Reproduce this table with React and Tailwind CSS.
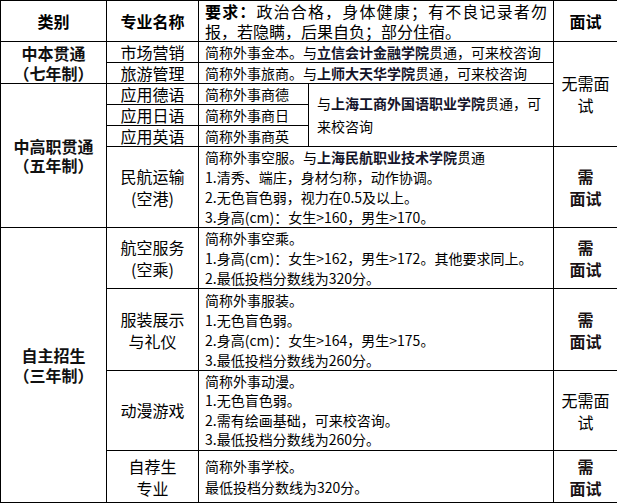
const FONT = "font-['Noto_Sans_CJK_SC','Noto_Sans',sans-serif]";

const cell = 'border border-black p-0';

function Lines({ lines }) {
  return (
    <div>
      {lines.map((l, i) => (
        <div key={i}>{l}</div>
      ))}
    </div>
  );
}

function Major({ children, tall = false }) {
  return (
    <td className={`${cell} text-center text-[16px] ${tall ? 'leading-[22px]' : 'leading-[19px]'}`}>
      {children}
    </td>
  );
}

function NeedInterview() {
  return (
    <td className={`${cell} text-center text-[16px] leading-[22px] font-bold text-[#1a1214]`}>
      <div>需</div>
      <div>面试</div>
    </td>
  );
}

function School({ children }) {
  return <span className="font-bold text-[#14142a]">{children}</span>;
}

export default function App() {
  return (
    <div className={`w-[617px] h-[503px] overflow-hidden bg-white text-black ${FONT}`}>
      <table className="w-[617px] table-fixed border-collapse">
        <colgroup>
          <col className="w-[106px]" />
          <col className="w-[92px]" />
          <col className="w-[110px]" />
          <col className="w-[245px]" />
          <col className="w-[64px]" />
        </colgroup>
        <tbody>
          {/* Header */}
          <tr className="h-[41px]">
            <td className={`${cell} text-center text-[16px] leading-[20px] font-bold`}>类别</td>
            <td className={`${cell} text-center text-[16px] leading-[20px] font-bold`}>专业名称</td>
            <td colSpan={2} className={`${cell} px-[6px] text-[16px] leading-[20px] text-justify`}>
              <span className="font-bold">要求：</span>政治合格，身体健康；有不良记录者勿报，若隐瞒，后果自负；部分住宿。
            </td>
            <td className={`${cell} text-center text-[16px] leading-[20px] font-bold`}>面试</td>
          </tr>

          {/* 中本贯通 */}
          <tr className="h-[21px]">
            <td rowSpan={2} className={`${cell} text-center text-[16px] leading-[20px] font-bold text-[#111]`}>
              <div>中本贯通</div>
              <div>（七年制）</div>
            </td>
            <Major>市场营销</Major>
            <td colSpan={2} className={`${cell} px-[6px] text-[14px] leading-[19px]`}>
              简称外事金本。与<School>立信会计金融学院</School>贯通，可来校咨询
            </td>
            <td rowSpan={5} className={`${cell} px-[4px] text-center text-[16px] leading-[22px]`}>
              无需面试
            </td>
          </tr>
          <tr className="h-[21px]">
            <Major>旅游管理</Major>
            <td colSpan={2} className={`${cell} px-[6px] text-[14px] leading-[19px]`}>
              简称外事旅商。与<School>上师大天华学院</School>贯通，可来校咨询
            </td>
          </tr>

          {/* 中高职贯通 */}
          <tr className="h-[21px]">
            <td rowSpan={4} className={`${cell} text-center text-[16px] leading-[19px] font-bold text-[#111]`}>
              <div>中高职贯通</div>
              <div>（五年制）</div>
            </td>
            <Major>应用德语</Major>
            <td className={`${cell} px-[6px] text-[14px] leading-[19px]`}>简称外事商德</td>
            <td rowSpan={3} className={`${cell} px-[8px] text-[14px] leading-[23px]`}>
              与<School>上海工商外国语职业学院</School>贯通，可来校咨询
            </td>
          </tr>
          <tr className="h-[21px]">
            <Major>应用日语</Major>
            <td className={`${cell} px-[6px] text-[14px] leading-[19px]`}>简称外事商日</td>
          </tr>
          <tr className="h-[21px]">
            <Major>应用英语</Major>
            <td className={`${cell} px-[6px] text-[14px] leading-[19px]`}>简称外事商英</td>
          </tr>
          <tr className="h-[81px]">
            <Major tall>
              <div>民航运输</div>
              <div>(空港)</div>
            </Major>
            <td colSpan={2} className={`${cell} px-[6px] text-[14px] leading-[20px]`}>
              <div>
                简称外事空服。与<School>上海民航职业技术学院</School>贯通
              </div>
              <div>1.清秀、端庄，身材匀称，动作协调。</div>
              <div>2.无色盲色弱，视力在0.5及以上。</div>
              <div>3.身高(cm)：女生&gt;160，男生&gt;170。</div>
            </td>
            <NeedInterview />
          </tr>

          {/* 自主招生 */}
          <tr className="h-[61px]">
            <td rowSpan={5} className={`${cell} text-center text-[16px] leading-[20px] font-bold text-[#111]`}>
              <div>自主招生</div>
              <div>（三年制）</div>
            </td>
            <Major tall>
              <div>航空服务</div>
              <div>(空乘)</div>
            </Major>
            <td colSpan={2} className={`${cell} px-[6px] text-[14px] leading-[20px]`}>
              <Lines
                lines={[
                  '简称外事空乘。',
                  '1.身高(cm)：女生>162，男生>172。其他要求同上。',
                  '2.最低投档分数线为320分。',
                ]}
              />
            </td>
            <NeedInterview />
          </tr>
          <tr className="h-[82px]">
            <Major tall>
              <div>服装展示</div>
              <div>与礼仪</div>
            </Major>
            <td colSpan={2} className={`${cell} px-[6px] text-[14px] leading-[20px]`}>
              <Lines
                lines={[
                  '简称外事服装。',
                  '1.无色盲色弱。',
                  '2.身高(cm)：女生>164，男生>175。',
                  '3.最低投档分数线为260分。',
                ]}
              />
            </td>
            <NeedInterview />
          </tr>
          <tr className="h-[80px]">
            <Major>动漫游戏</Major>
            <td colSpan={2} className={`${cell} px-[6px] text-[14px] leading-[19.5px]`}>
              <Lines
                lines={[
                  '简称外事动漫。',
                  '1.无色盲色弱。',
                  '2.需有绘画基础，可来校咨询。',
                  '3.最低投档分数线为260分。',
                ]}
              />
            </td>
            <td className={`${cell} px-[4px] text-center text-[16px] leading-[22px]`}>无需面试</td>
          </tr>
          <tr className="h-[52px]">
            <Major tall>
              <div>自荐生</div>
              <div>专业</div>
            </Major>
            <td colSpan={2} className={`${cell} px-[6px] text-[14px] leading-[21px]`}>
              <Lines lines={['简称外事学校。', '最低投档分数线为320分。']} />
            </td>
            <NeedInterview />
          </tr>
        </tbody>
      </table>
    </div>
  );
}
